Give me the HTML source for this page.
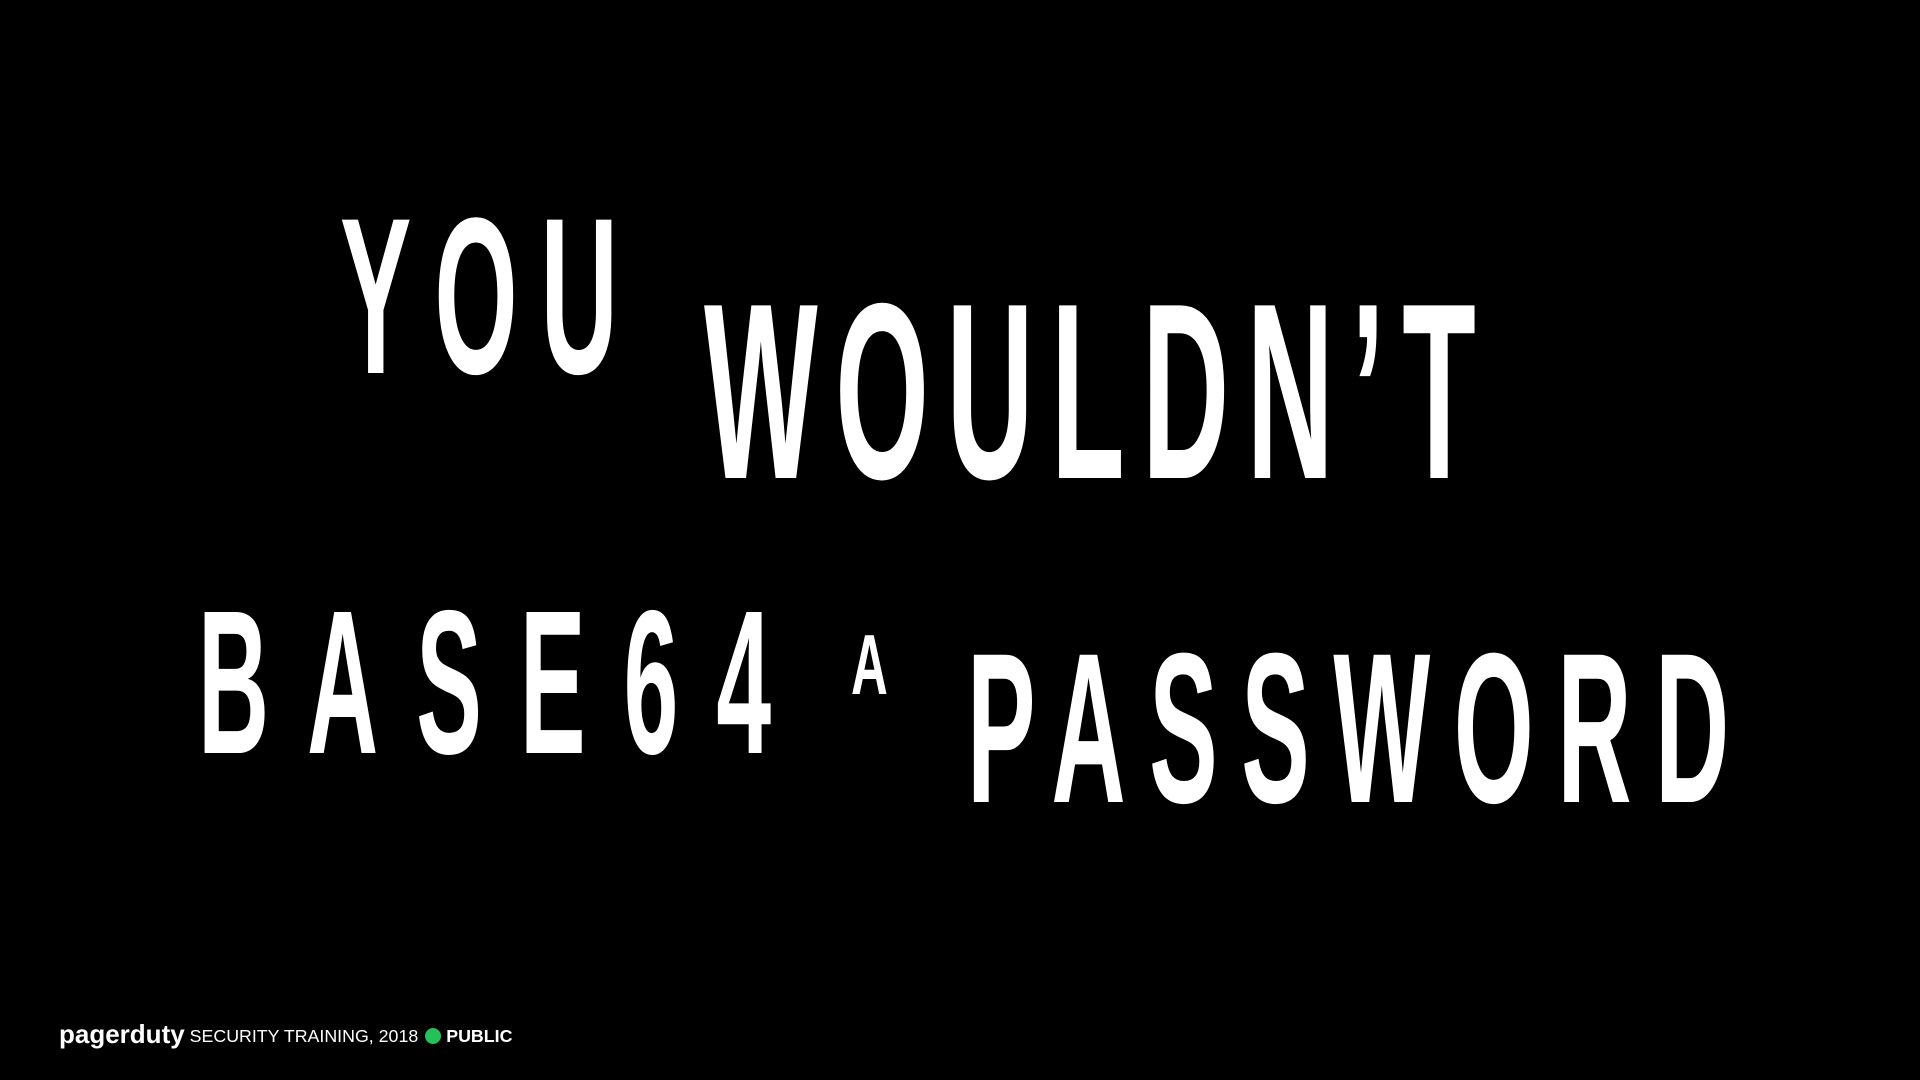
<!DOCTYPE html>
<html><head><style>
html,body{margin:0;padding:0;background:#000;width:1920px;height:1080px;overflow:hidden}
svg{position:absolute;left:0;top:0}
.f{position:absolute;left:59px;top:1022px;font-family:"Liberation Sans",sans-serif;color:#fff;white-space:nowrap;font-size:17.8px;line-height:24px}
.logo{font-weight:bold;font-size:26px;letter-spacing:0px;vertical-align:-1px}
.dot{display:inline-block;width:16px;height:16px;border-radius:50%;background:#24c15a;vertical-align:-2px;margin:0 5px 0 7px}
</style></head><body>
<svg width="1920" height="1080" viewBox="0 0 1920 1080" font-family="Liberation Sans, sans-serif" font-weight="bold" fill="#fff">
<text transform="translate(340,373) scale(0.48,1)" font-size="223" textLength="579" lengthAdjust="spacing">YOU</text>
<text transform="translate(704,478) scale(0.48,1)" font-size="251" textLength="1608" lengthAdjust="spacing">WOULDN’T</text>
<text transform="translate(198,753) scale(0.48,1)" font-size="205" textLength="1194" lengthAdjust="spacing">BASE64</text>
<text transform="translate(851,694) scale(0.6,1)" font-size="85">A</text>
<text transform="translate(967,802) scale(0.48,1)" font-size="214" textLength="1588" lengthAdjust="spacing">PASSWORD</text>
</svg>
<div class="f"><span class="logo">pagerduty</span> SECURITY TRAINING, 2018<span class="dot"></span><b>PUBLIC</b></div>
</body></html>
